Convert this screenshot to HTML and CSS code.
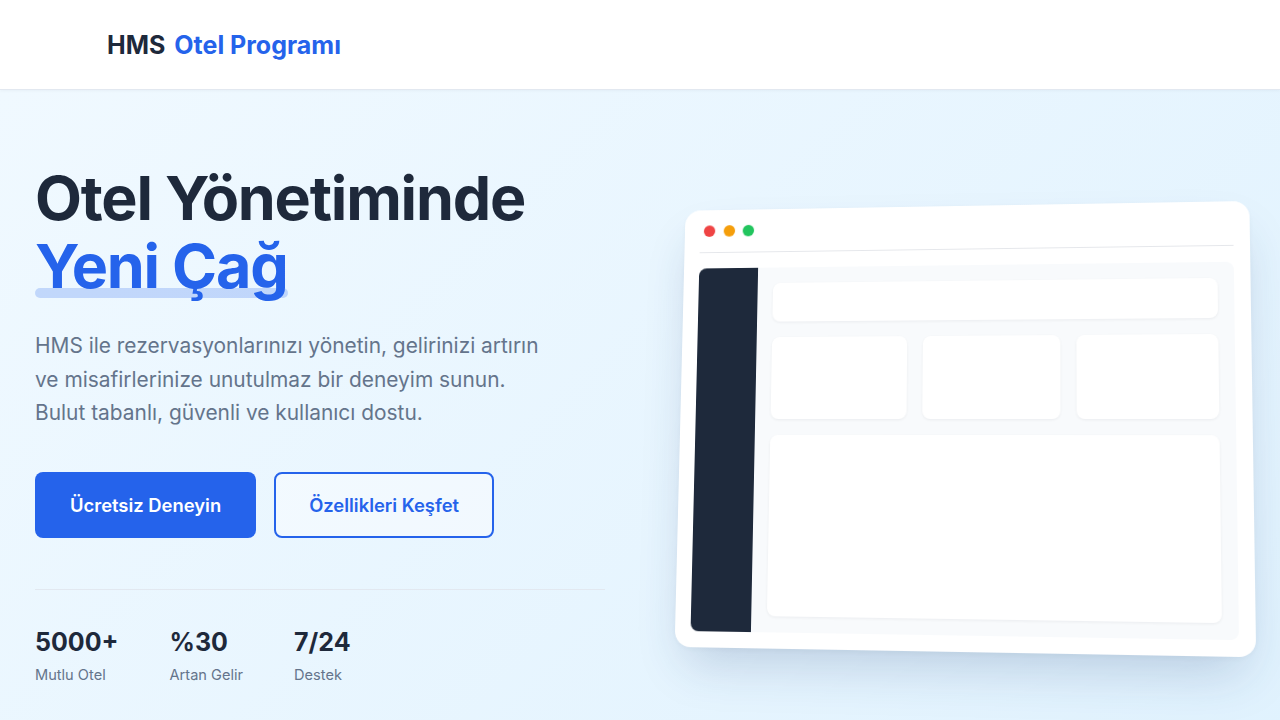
FILE: index.html
```html
<!DOCTYPE html>
<html lang="tr">
<head>
<meta charset="utf-8">
<title>HMS Otel Programı</title>
<link rel="stylesheet" href="styles.css">
</head>
<body>
<header class="site-header">
  <div class="brand"><span class="brand-hms">HMS</span><span class="brand-name">Otel Programı</span></div>
</header>
<main class="hero">
  <section class="hero-text">
    <h1 class="hero-title">Otel Yönetiminde<br><span class="hero-accent">Yeni Çağ</span></h1>
    <p class="hero-lead">HMS ile rezervasyonlarınızı yönetin, gelirinizi artırın ve misafirlerinize unutulmaz bir deneyim sunun. Bulut tabanlı, güvenli ve kullanıcı dostu.</p>
    <div class="hero-actions">
      <a class="btn btn-primary" href="#">Ücretsiz Deneyin</a>
      <a class="btn btn-outline" href="#">Özellikleri Keşfet</a>
    </div>
    <div class="hero-stats">
      <div class="stat"><div class="stat-value">5000+</div><div class="stat-label">Mutlu Otel</div></div>
      <div class="stat"><div class="stat-value">%30</div><div class="stat-label">Artan Gelir</div></div>
      <div class="stat"><div class="stat-value">7/24</div><div class="stat-label">Destek</div></div>
    </div>
  </section>
  <div class="hero-visual">
    <div class="mock-window">
      <div class="mock-bar">
        <span class="dot dot-red"></span>
        <span class="dot dot-amber"></span>
        <span class="dot dot-green"></span>
      </div>
      <div class="mock-body">
        <div class="mock-sidebar"></div>
        <div class="mock-main">
          <div class="mock-topbar"></div>
          <div class="mock-cards">
            <div class="mock-card"></div>
            <div class="mock-card"></div>
            <div class="mock-card"></div>
          </div>
          <div class="mock-panel"></div>
        </div>
      </div>
    </div>
  </div>
</main>
</body>
</html>
```

FILE: styles.css
```css
* { box-sizing: border-box; }

html, body {
  margin: 0;
  padding: 0;
}

body {
  font-family: Inter, "Noto Sans", "Liberation Sans", sans-serif;
  color: #1e293b;
  background: #f0f9ff;
  overflow: hidden;
}

.site-header {
  height: 90px;
  background: #ffffff;
  border-bottom: 1px solid #e2e8f0;
  box-shadow: 0 1px 3px rgba(15, 23, 42, 0.04);
  display: flex;
  align-items: center;
  padding-left: 107px;
  position: relative;
  z-index: 2;
}

.brand {
  font-size: 25px;
  font-weight: 700;
}

.brand-hms { color: #1e293b; }
.brand-name { color: #2563eb; margin-left: 9px; }

.hero {
  height: 670px;
  display: grid;
  grid-template-columns: 570px minmax(0, 1fr);
  column-gap: 80px;
  align-items: center;
  padding: 0 35px;
  background: linear-gradient(135deg, #f0f9ff 0%, #e0f2fe 100%);
}

.hero-title {
  margin: 0;
  font-size: 61px;
  line-height: 68px;
  font-weight: 700;
  letter-spacing: -0.02em;
  color: #1e293b;
}

.hero-accent {
  display: inline-block;
  position: relative;
  color: #2563eb;
  isolation: isolate;
}

.hero-accent::after {
  content: "";
  position: absolute;
  left: 0;
  right: 0;
  bottom: 2px;
  height: 10px;
  border-radius: 5px;
  background: rgba(37, 99, 235, 0.22);
  z-index: -1;
}

.hero-lead {
  margin: 29px 0 0;
  max-width: 522px;
  font-size: 20.9px;
  line-height: 33.5px;
  color: #64748b;
}

.hero-actions {
  display: flex;
  gap: 18px;
  margin-top: 42px;
}

.btn {
  display: inline-block;
  font-size: 18.4px;
  line-height: 26px;
  font-weight: 600;
  text-decoration: none;
  border-radius: 8px;
}

.btn-primary {
  padding: 20px 35px;
  background: #2563eb;
  color: #ffffff;
}

.btn-outline {
  padding: 18px 33px;
  border: 2px solid #2563eb;
  color: #2563eb;
  background: rgba(255, 255, 255, 0.4);
}

.hero-stats {
  margin-top: 51px;
  padding-top: 37px;
  border-top: 1px solid #e2e8f0;
  display: flex;
  gap: 51px;
}

.stat-value {
  font-size: 25px;
  line-height: 31px;
  font-weight: 700;
  color: #1e293b;
}

.stat-label {
  margin-top: 6px;
  font-size: 14.6px;
  line-height: 22px;
  color: #64748b;
}

.hero-visual {
  display: flex;
  justify-content: center;
  padding-right: 10px;
}

.mock-window {
  flex: none;
  width: 574px;
  padding: 16px;
  background: #ffffff;
  border-radius: 16px;
  box-shadow: 0 25px 50px -12px rgba(30, 64, 120, 0.22), 0 2px 6px rgba(15, 23, 42, 0.04);
  transform: perspective(1000px) rotateY(-4.5deg) rotateX(4deg);
}

.mock-bar {
  display: flex;
  gap: 8.5px;
  padding: 0 0 16px 4px;
  border-bottom: 1px solid #e5e7eb;
}

.dot {
  width: 12px;
  height: 12px;
  border-radius: 50%;
}

.dot-red { background: #ef4444; }
.dot-amber { background: #f59e0b; }
.dot-green { background: #22c55e; }

.mock-body {
  margin-top: 16px;
  height: 370px;
  display: flex;
  background: #f8fafc;
  border-radius: 8px;
  overflow: hidden;
}

.mock-sidebar {
  width: 62px;
  background: #1e293b;
}

.mock-main {
  flex: 1;
  padding: 16px;
  display: flex;
  flex-direction: column;
  gap: 16px;
}

.mock-topbar {
  height: 40px;
  background: #ffffff;
  border-radius: 8px;
  box-shadow: 0 1px 3px rgba(15, 23, 42, 0.06);
}

.mock-cards {
  display: grid;
  grid-template-columns: repeat(3, 1fr);
  gap: 16px;
}

.mock-card {
  height: 84px;
  background: #ffffff;
  border-radius: 8px;
  box-shadow: 0 1px 3px rgba(15, 23, 42, 0.06);
}

.mock-panel {
  flex: 1;
  background: #ffffff;
  border-radius: 8px;
  box-shadow: 0 1px 3px rgba(15, 23, 42, 0.06);
}
```
